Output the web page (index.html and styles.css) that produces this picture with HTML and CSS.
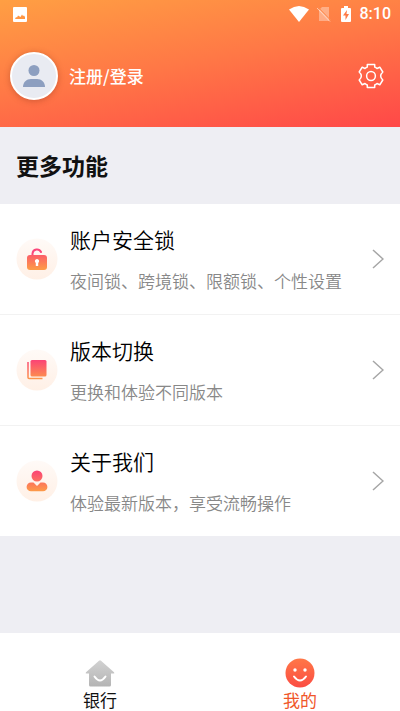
FILE: index.html
```html
<!DOCTYPE html>
<html lang="zh-CN">
<head>
<meta charset="utf-8">
<meta name="viewport" content="width=device-width, initial-scale=1">
<title>我的</title>
<link rel="stylesheet" href="styles.css">
</head>
<body>
<svg class="defs" width="0" height="0" aria-hidden="true">
  <defs>
    <linearGradient id="warm" gradientUnits="userSpaceOnUse" x1="0" y1="10" x2="0" y2="31"><stop offset="0" stop-color="#fb3f78"/><stop offset="1" stop-color="#fd9a48"/></linearGradient>
    <linearGradient id="halo" x1="0" y1="0" x2="0" y2="1"><stop offset="0" stop-color="#fffaf7"/><stop offset="1" stop-color="#fff0e6"/></linearGradient>
    <linearGradient id="grey" x1="0" y1="0" x2="0" y2="1"><stop offset="0" stop-color="#d2d2d2"/><stop offset="1" stop-color="#b4b4b4"/></linearGradient>
    <linearGradient id="face" x1="0" y1="0" x2="0" y2="1"><stop offset="0" stop-color="#ff7747"/><stop offset="1" stop-color="#fb4c43"/></linearGradient>
  </defs>
</svg>
<header class="hero">
  <div class="status">
    <svg class="status-photo" width="14" height="15" viewBox="0 0 14 15" aria-hidden="true"><path fill="#fff" fill-rule="evenodd" d="M1 0h12a1 1 0 0 1 1 1v13a1 1 0 0 1-1 1H1a1 1 0 0 1-1-1V1a1 1 0 0 1 1-1zM2 12h10V10L11 8.500 10 9 9 7.500 7.500 10 5 8.500 4 10.500 3 10z"/></svg>
    <svg width="20" height="16" viewBox="0 0 20 16" aria-hidden="true"><path fill="#fff" d="M0 3.500Q10-3.500 20 3.500L10 16z"/></svg>
    <svg class="status-sim" width="14" height="16" viewBox="0 0 14 16" aria-hidden="true"><path fill="#fff" opacity=".35" d="M5 1h7v14H2V4z"/><path stroke="#ff8d50" d="M1 1l13 13.500"/><path stroke="#fff" opacity=".55" d="M0 2l13 13.500"/></svg>
    <svg class="status-battery" width="10" height="16" viewBox="0 0 10 16" aria-hidden="true"><path fill="#fff" d="M3 0h4v2h2a1 1 0 0 1 1 1v12a1 1 0 0 1-1 1H1a1 1 0 0 1-1-1V3a1 1 0 0 1 1-1h2z"/><path fill="#ff7a46" d="M6 4L2 9.500h2.500V14L8 8H5.500z"/></svg>
    <time class="clock">8:10</time>
  </div>
  <div class="profile">
    <a class="account" href="#login">
      <span class="avatar"><svg width="24" height="24" viewBox="0 0 24 24" fill="#8d9fc0" aria-hidden="true"><circle cx="12" cy="6.500" r="5.500"/><path d="M1 23c0-5 3.500-8 8-8h6c4.500 0 8 3 8 8z"/></svg></span>
      <span>注册/登录</span>
    </a>
    <button class="settings" type="button" aria-label="设置">
      <svg width="26" height="26" viewBox="-13 -13 26 26" fill="none" stroke="#fff" stroke-width="1.500" stroke-linejoin="round" aria-hidden="true"><path d="M-3.700-11.500H3.700V-9Q5-8.500 6-7.500L8.800-8.800 11.800-4Q7.500 0 11.800 4L8.800 8.800 6 7.500Q5 8.500 3.700 9V11.500H-3.700V9Q-5 8.500-6 7.500L-8.800 8.800-11.800 4Q-7.500 0-11.800-4L-8.800-8.800-6-7.500Q-5-8.500-3.700-9z"/><circle r="4.400"/></svg>
    </button>
  </div>
</header>
<main>
  <h1 class="heading">更多功能</h1>
  <ul class="menu">
    <li><a class="row" href="#lock">
      <svg width="42" height="42" viewBox="0 0 42 42" aria-hidden="true"><circle cx="21" cy="21" r="20.500" fill="url(#halo)"/><path d="M16.500 18v-2.500a4.500 4.500 0 0 1 8.500-1.500" fill="none" stroke="#fb477b" stroke-width="2" stroke-linecap="round"/><rect x="11" y="17" width="20" height="15" rx="3" fill="url(#warm)"/><path fill="#fff" d="M21 21a2.200 2.200 0 0 1 1.200 4V28h-2.400v-3A2.200 2.200 0 0 1 21 21z"/></svg>
      <span class="copy"><span class="title">账户安全锁</span><span class="note">夜间锁、跨境锁、限额锁、个性设置</span></span>
      <svg class="arrow" width="12" height="20" viewBox="0 0 12 20" aria-hidden="true"><path d="M1 1l10 9-10 9"/></svg>
    </a></li>
    <li><a class="row" href="#version">
      <svg width="42" height="42" viewBox="0 0 42 42" aria-hidden="true"><circle cx="21" cy="21" r="20.500" fill="url(#halo)"/><rect x="14.500" y="11" width="16" height="16.500" rx="1.500" fill="url(#warm)"/><path d="M12 13v15.500a1 1 0 0 0 1 1h13.500" fill="none" stroke="url(#warm)" stroke-width="1.500"/></svg>
      <span class="copy"><span class="title">版本切换</span><span class="note">更换和体验不同版本</span></span>
      <svg class="arrow" width="12" height="20" viewBox="0 0 12 20" aria-hidden="true"><path d="M1 1l10 9-10 9"/></svg>
    </a></li>
    <li><a class="row" href="#about">
      <svg width="42" height="42" viewBox="0 0 42 42" aria-hidden="true"><circle cx="21" cy="21" r="20.500" fill="url(#halo)"/><circle cx="21" cy="16" r="5.500" fill="url(#warm)"/><path fill="url(#warm)" d="M15 22.500h2.500L21 26l3.500-3.500H27a4.300 4.300 0 0 1 0 8.800H15a4.300 4.300 0 0 1 0-8.800z"/></svg>
      <span class="copy"><span class="title">关于我们</span><span class="note">体验最新版本，享受流畅操作</span></span>
      <svg class="arrow" width="12" height="20" viewBox="0 0 12 20" aria-hidden="true"><path d="M1 1l10 9-10 9"/></svg>
    </a></li>
  </ul>
</main>
<nav class="tabs">
  <a class="tab" href="#bank">
    <svg width="30" height="30" viewBox="0 0 30 30" aria-hidden="true"><path fill="url(#grey)" d="M14 2.700a1.500 1.500 0 0 1 2 0l13 11.500q1 1.300-.500 1.300H26V27a1.500 1.500 0 0 1-1.500 1.500h-19A1.500 1.500 0 0 1 4 27V15.500H1.500Q0 15.500 1 14.200z"/><path d="M9.500 18.500q5.500 8 11 0" fill="none" stroke="#fff" stroke-width="2" stroke-linecap="round"/></svg>
    <span>银行</span>
  </a>
  <a class="tab active" href="#mine" aria-current="page">
    <svg width="30" height="30" viewBox="0 0 30 30" aria-hidden="true"><circle cx="15" cy="15" r="14.500" fill="url(#face)"/><g fill="#fff"><circle cx="10" cy="12" r="1.700"/><circle cx="20" cy="12" r="1.700"/></g><path d="M9 18.500q6 8 12 0" fill="none" stroke="#fff" stroke-width="2" stroke-linecap="round"/></svg>
    <span>我的</span>
  </a>
</nav>
</body>
</html>
```
FILE: styles.css
```css
* { box-sizing: border-box; }

body {
  margin: 0;
  min-height: 100vh;
  display: flex;
  flex-direction: column;
  background: #eeeef3;
  color: #111;
  font-family: "Noto Sans CJK SC", sans-serif;
}

a { color: inherit; text-decoration: none; }
svg { display: block; flex: none; }
.defs { position: absolute; }

.hero {
  padding-bottom: 27px;
  background: linear-gradient(170deg, #ff9f43 0%, #ff7846 48%, #ff4848 100%);
  color: #fff;
}

.status {
  display: flex;
  align-items: center;
  height: 28px;
  padding: 0 9px 0 13px;
}
.status-photo { margin-right: auto; }
.status-sim { margin-left: 8px; }
.status-battery { margin-left: 10px; }
.clock {
  margin-left: 9px;
  font: 500 16px/28px Roboto, sans-serif;
}

.profile {
  display: flex;
  align-items: center;
  justify-content: space-between;
  padding: 24px 16px 0 10px;
}
.account {
  display: flex;
  align-items: center;
  gap: 11px;
  font-size: 17px;
  font-weight: 500;
  line-height: 24px;
}
.avatar {
  display: grid;
  place-items: center;
  width: 48px;
  height: 48px;
  border: 2px solid #fff;
  border-radius: 50%;
  background: #e9ebf2;
  box-shadow: 0 1px 6px rgba(120, 40, 20, 0.35);
}
.settings {
  padding: 0;
  border: 0;
  background: none;
}

main { flex: 1; }
.heading {
  margin: 0;
  padding: 18px 16px 19px;
  font-size: 23px;
  font-weight: 700;
  line-height: 40px;
}
.menu {
  margin: 0;
  padding: 0;
  list-style: none;
  background: #fff;
}
.menu li + li { border-top: 1px solid #f2f2f2; }
.row {
  display: flex;
  align-items: center;
  padding: 17px 16px;
}
.copy {
  flex: 1;
  display: flex;
  flex-direction: column;
  gap: 10px;
  margin-left: 12px;
  padding-top: 2px;
  font-weight: 350;
}
.title { color: #000; font-size: 21px; line-height: 32px; }
.note { color: #888; font-size: 17px; line-height: 32px; }
.arrow {
  fill: none;
  stroke: #a6a6a6;
  stroke-width: 1.5;
}

.tabs {
  display: flex;
  background: #fff;
}
.tab {
  flex: 1;
  display: flex;
  flex-direction: column;
  align-items: center;
  padding: 25px 0 0;
  font-size: 17px;
  line-height: 23px;
}
.active { color: #f0562a; }
```
